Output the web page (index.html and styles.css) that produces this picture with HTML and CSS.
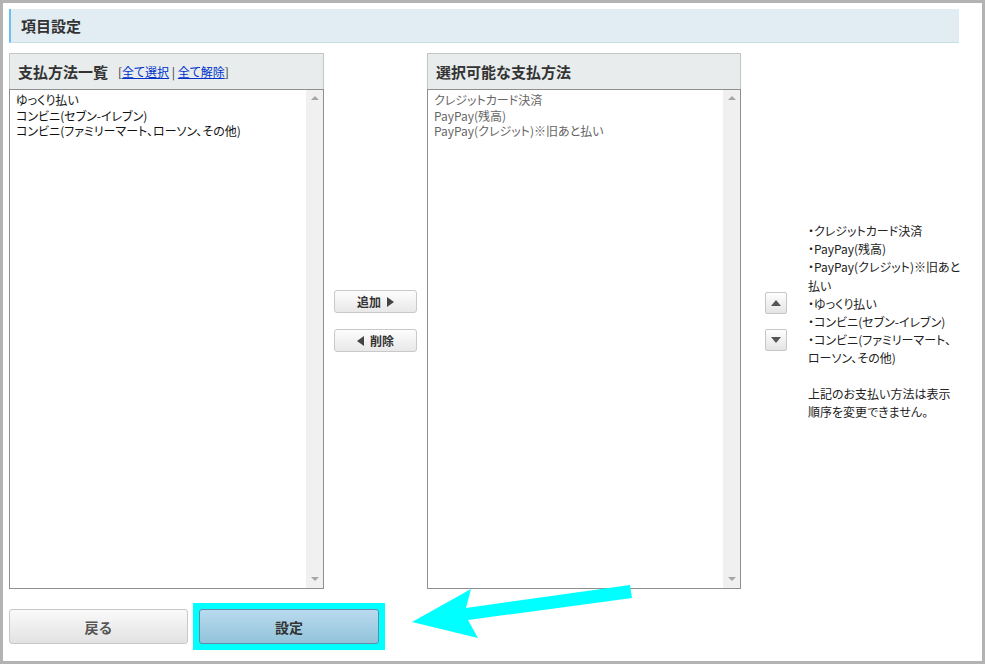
FILE: index.html
```html
<!DOCTYPE html>
<html lang="ja">
<head>
    <meta charset="UTF-8">
    <title>項目設定</title>
    <link rel="stylesheet" href="styles.css">
</head>
<body>
    <div class="frame">
        <h2 class="section-title">項目設定</h2>

        <div class="columns">
            <div class="panel panel-left">
                <div class="panel-head">
                    <span class="panel-title">支払方法一覧</span>
                    <span class="panel-links">[<a href="#">全て選択</a> | <a href="#">全て解除</a>]</span>
                </div>
                <div class="listbox">
                    <ul class="list-items">
                        <li>ゆっくり払い</li>
                        <li>コンビニ(セブン-イレブン)</li>
                        <li>コンビニ(ファミリーマート、ローソン、その他)</li>
                    </ul>
                    <div class="scrollbar">
                        <span class="sb-arrow up"></span>
                        <span class="sb-arrow down"></span>
                    </div>
                </div>
            </div>

            <div class="move-col">
                <button class="move-btn">追加 <svg width="7" height="10" viewBox="0 0 7 10"><path d="M0 0L7 5L0 10Z" fill="#444"/></svg></button>
                <button class="move-btn"><svg width="7" height="10" viewBox="0 0 7 10"><path d="M7 0L0 5L7 10Z" fill="#444"/></svg> 削除</button>
            </div>

            <div class="panel panel-right">
                <div class="panel-head">
                    <span class="panel-title">選択可能な支払方法</span>
                </div>
                <div class="listbox">
                    <ul class="list-items muted">
                        <li>クレジットカード決済</li>
                        <li>PayPay(残高)</li>
                        <li>PayPay(クレジット)※旧あと払い</li>
                    </ul>
                    <div class="scrollbar">
                        <span class="sb-arrow up"></span>
                        <span class="sb-arrow down"></span>
                    </div>
                </div>
            </div>

            <div class="order-col">
                <button class="order-btn"><svg width="10" height="6" viewBox="0 0 10 6"><path d="M0 6L5 0L10 6Z" fill="#555"/></svg></button>
                <button class="order-btn"><svg width="10" height="6" viewBox="0 0 10 6"><path d="M0 0L10 0L5 6Z" fill="#555"/></svg></button>
            </div>

            <div class="note-col">
                <p class="note">・クレジットカード決済<br>・PayPay(残高)<br>・PayPay(クレジット)※旧あと<br>払い<br>・ゆっくり払い<br>・コンビニ(セブン-イレブン)<br>・コンビニ(ファミリーマート、<br>ローソン、その他)</p>
                <p class="note">上記のお支払い方法は表示<br>順序を変更できません。</p>
            </div>
        </div>

        <div class="actions">
            <button class="btn btn-back">戻る</button>
            <div class="highlight">
                <button class="btn btn-submit">設定</button>
            </div>
        </div>
    </div>

    <svg class="callout" width="985" height="664" viewBox="0 0 985 664">
        <polygon points="630,585 632,598 468,620 478,638 412,622 471,589 466,608" fill="#00ffff"/>
    </svg>
</body>
</html>
```

FILE: styles.css
```css
body {
    margin: 0;
    position: relative;
    font-family: "Noto Sans CJK JP", "Noto Sans", sans-serif;
    color: #333;
    background-color: #fff;
}
.frame {
    width: 985px;
    height: 664px;
    box-sizing: border-box;
    border: 3px solid #b3b3b3;
    padding: 6px 0 0 6px;
}
.section-title {
    width: 950px;
    height: 34px;
    box-sizing: border-box;
    margin: 0;
    padding-left: 10px;
    background-color: #e2edf3;
    border-left: 2px solid #6cc0ef;
    border-bottom: 1px solid #c6e0e6;
    font-size: 15px;
    font-weight: bold;
    line-height: 33px;
    color: #333;
}
.columns {
    display: flex;
    height: 536px;
    margin-top: 10px;
}
.panel {
    display: flex;
    flex-direction: column;
}
.panel-left {
    width: 315px;
}
.panel-right {
    width: 314px;
}
.panel-head {
    height: 35px;
    border: 1px solid #c3c6c6;
    border-bottom: none;
    background-color: #e8eced;
    padding-left: 8px;
    display: flex;
    align-items: center;
    gap: 10px;
}
.panel-title {
    font-size: 15px;
    font-weight: bold;
    color: #333;
}
.panel-links {
    font-size: 12px;
    color: #333;
    font-feature-settings: "palt";
}
.panel-links a {
    color: #0033cc;
    text-decoration: underline;
}
.listbox {
    flex: 1;
    display: flex;
    border: 1px solid #8e8f8f;
    background-color: #fff;
}
.list-items {
    flex: 1;
    list-style: none;
    margin: 0;
    padding: 2px 6px;
    font-size: 12px;
    line-height: 15.5px;
    color: #111;
    font-feature-settings: "palt";
}
.list-items.muted {
    color: #666;
}
.scrollbar {
    width: 17px;
    background-color: #f0f0f0;
    position: relative;
}
.sb-arrow {
    position: absolute;
    left: 5px;
    width: 0;
    height: 0;
    border-left: 4px solid transparent;
    border-right: 4px solid transparent;
}
.sb-arrow.up {
    top: 6px;
    border-bottom: 4px solid #a6a6a6;
}
.sb-arrow.down {
    bottom: 7px;
    border-top: 4px solid #a6a6a6;
}
.move-col {
    width: 103px;
    box-sizing: border-box;
    padding-left: 10px;
    display: flex;
    flex-direction: column;
    justify-content: center;
    gap: 16px;
}
.move-btn {
    width: 83px;
    height: 23px;
    border: 1px solid #c9c9c9;
    border-radius: 3px;
    background: linear-gradient(#fdfdfd, #e8e8e8);
    font-family: inherit;
    font-size: 12px;
    font-weight: bold;
    color: #333;
    display: flex;
    align-items: center;
    justify-content: center;
    gap: 6px;
    padding: 0;
    cursor: pointer;
}
.order-col {
    width: 67px;
    box-sizing: border-box;
    padding-left: 24px;
    display: flex;
    flex-direction: column;
    justify-content: center;
    gap: 15px;
}
.order-btn {
    width: 22px;
    height: 22px;
    border: 1px solid #c6c6c6;
    border-radius: 2px;
    background: linear-gradient(#fefefe, #e4e4e4);
    display: flex;
    align-items: center;
    justify-content: center;
    padding: 0;
    cursor: pointer;
}
.note-col {
    display: flex;
    flex-direction: column;
    justify-content: center;
    padding-top: 1px;
}
.note {
    margin: 0;
    font-size: 12px;
    line-height: 18.2px;
    color: #222;
    white-space: nowrap;
    font-feature-settings: "palt";
}
.note + .note {
    margin-top: 17px;
}
.actions {
    display: flex;
    align-items: flex-start;
    margin-top: 14px;
}
.btn {
    height: 35px;
    border-radius: 3px;
    font-family: inherit;
    font-size: 14px;
    font-weight: bold;
    cursor: pointer;
}
.btn-back {
    width: 179px;
    margin-top: 6px;
    border: 1px solid #c8c8c8;
    background: linear-gradient(#fafafa, #e2e2e2);
    color: #555;
}
.highlight {
    margin-left: 5px;
    padding: 6px;
    background-color: #00ffff;
}
.btn-submit {
    display: block;
    width: 180px;
    border: 1px solid #5f8ba5;
    background: linear-gradient(#b9daee, #92c3da);
    color: #333;
}
.callout {
    position: absolute;
    top: 0;
    left: 0;
    pointer-events: none;
}
```
